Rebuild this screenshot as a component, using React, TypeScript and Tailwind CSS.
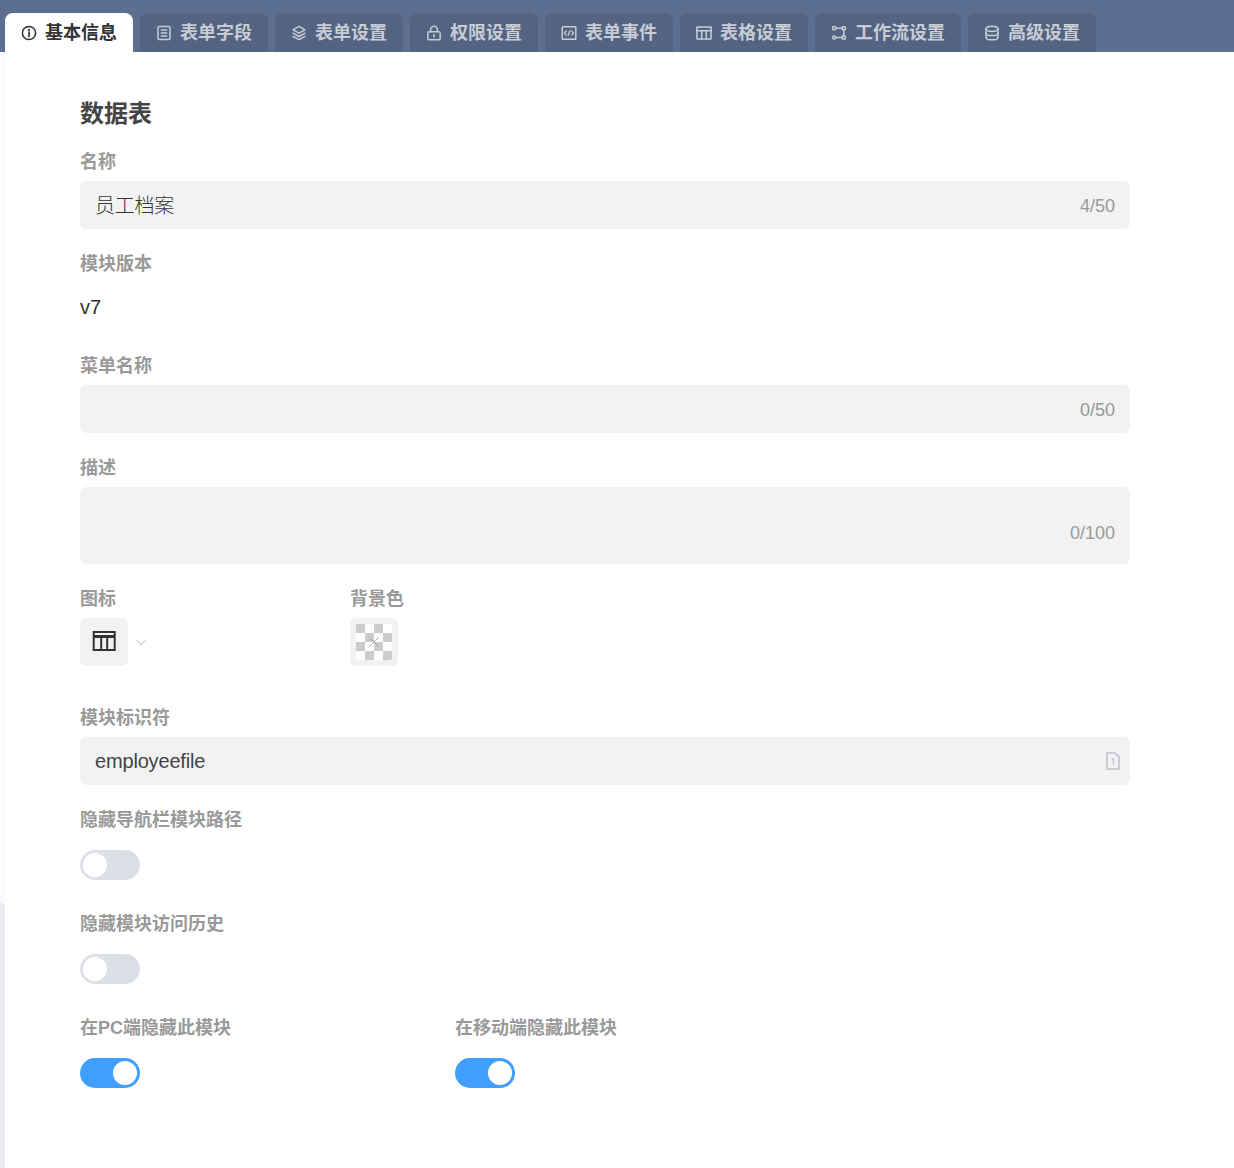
import React from "react";

const sv = { width: 16, height: 16, viewBox: "0 0 16 16", fill: "none", stroke: "currentColor", strokeWidth: 1.5, strokeLinecap: "round" as const, strokeLinejoin: "round" as const };

const icons: Record<string, React.ReactNode> = {
  info: (
    <svg {...sv}>
      <circle cx="8" cy="8" r="6.6" />
      <path d="M8 7.400v4" strokeWidth="1.700" />
      <path d="M8 4.600v.9" strokeWidth="1.800" />
    </svg>
  ),
  list: (
    <svg {...sv}>
      <rect x="2" y="1.500" width="12" height="13" rx="1" />
      <path d="M5.300 5h5.400M5.300 8h5.400M5.300 11h5.400" />
    </svg>
  ),
  layers: (
    <svg {...sv}>
      <path d="M8 1.400 14 4.800l-6 3.400L2 4.800z" />
      <path d="M2 8.200 8 11.500l6-3.300" />
      <path d="M2 11.300 8 14.600l6-3.300" />
    </svg>
  ),
  lock: (
    <svg {...sv}>
      <rect x="1.800" y="6.800" width="12.400" height="8" rx="1.400" />
      <path d="M4.600 6.800V4.600a3.400 3.400 0 0 1 6.800 0v2.200" />
      <path d="M8 9.800v1.800" strokeWidth="1.700" />
    </svg>
  ),
  code: (
    <svg {...sv}>
      <rect x="1.200" y="1.800" width="13.600" height="12.400" rx="0.8" />
      <path d="M5.200 6 3.500 8l1.700 2M10.800 6l1.700 2-1.700 2M8.900 5.500 7.100 10.500" strokeWidth="1.300" />
    </svg>
  ),
  table: (
    <svg {...sv}>
      <rect x="0.900" y="2" width="14.200" height="12" rx="0.5" />
      <path d="M0.900 5.800h14.200M5.700 5.800V14M10.300 5.800V14" />
    </svg>
  ),
  flow: (
    <svg {...sv}>
      <rect x="1.700" y="1.800" width="3" height="3" rx="0.5" />
      <rect x="11.300" y="1.800" width="3" height="3" rx="0.5" />
      <circle cx="3.200" cy="12.500" r="1.600" />
      <rect x="11.300" y="11" width="3" height="3" rx="0.5" />
      <path d="M4.700 3.300h6.600M12.800 4.800V11M4.800 12.500h6.500" />
    </svg>
  ),
  db: (
    <svg {...sv}>
      <ellipse cx="8" cy="3.800" rx="6" ry="2.600" />
      <path d="M2 3.800v8.400c0 1.400 2.700 2.600 6 2.600s6-1.200 6-2.600V3.800" />
      <path d="M2 8c0 1.400 2.700 2.600 6 2.600S14 9.400 14 8" />
    </svg>
  ),
};

const tabs = [
  ["info", "基本信息"],
  ["list", "表单字段"],
  ["layers", "表单设置"],
  ["lock", "权限设置"],
  ["code", "表单事件"],
  ["table", "表格设置"],
  ["flow", "工作流设置"],
  ["db", "高级设置"],
];

function Label({ children }: { children: React.ReactNode }) {
  return <div className="h-6 mb-2 text-[18px] leading-[27px] font-bold text-[#999999]">{children}</div>;
}

function Field({ label, value, count }: { label: string; value?: string; count: string }) {
  return (
    <div className="mb-[22px]">
      <Label>{label}</Label>
      <div className="h-12 rounded-[6px] bg-[#f2f2f2] px-[15px] flex items-center justify-between">
        <span className="text-[20px] leading-[30px] pt-[1px] font-light tracking-[-0.25px] text-[#333333]">{value}</span>
        <span className="text-[18px] leading-[26px] pt-[1px] text-[#999999]">{count}</span>
      </div>
    </div>
  );
}

function Toggle({ on }: { on?: boolean }) {
  return (
    <div className={`w-[60px] h-[30px] rounded-full p-[3px] flex ${on ? "bg-[#409eff] justify-end" : "bg-[#dcdfe6] justify-start"}`}>
      <div className="w-6 h-6 rounded-full bg-white" />
    </div>
  );
}

function ToggleItem({ label, on }: { label: string; on?: boolean }) {
  return (
    <div className="mb-5">
      <Label>{label}</Label>
      <div className="h-[52px] flex items-center">
        <Toggle on={on} />
      </div>
    </div>
  );
}

export default function App() {
  return (
    <div
      className="w-[1234px] h-[1168px] overflow-hidden bg-white flex flex-col"
      style={{ fontFamily: '"Liberation Sans", "Noto Sans CJK SC", sans-serif' }}
    >
      <div className="h-[52px] shrink-0 bg-[#5d6f91] pt-[13px] pl-[5px] flex gap-[7px]">
        {tabs.map(([ic, t], i) => (
          <div
            key={t}
            className={`h-[39px] px-4 rounded-t-lg flex items-center gap-2 text-[18px] font-bold ${
              i === 0 ? "bg-white text-[#333333]" : "bg-[#536382] text-[#c8ccd4]"
            }`}
          >
            {icons[ic]}
            <span className="pt-[2px]">{t}</span>
          </div>
        ))}
      </div>

      <div className="flex-1 flex">
        <div className="w-[5px] shrink-0 flex flex-col">
          <div className="h-[851px] bg-[#f8fafb]" />
          <div className="flex-1 bg-[#e8eaf0] rounded-tr-[4px]" />
        </div>
        <div className="w-[1050px] ml-[75px] pt-[45px]">
          <div className="h-8 mb-5 text-[24px] leading-[34px] font-bold text-[#444444]">数据表</div>

          <Field label="名称" value="员工档案" count="4/50" />

          <div className="mb-[22px]">
            <Label>模块版本</Label>
            <div className="h-12 flex items-center text-[20px] text-[#333333]">v7</div>
          </div>

          <Field label="菜单名称" count="0/50" />

          <div className="mb-[22px]">
            <Label>描述</Label>
            <div className="h-[77px] rounded-[6px] bg-[#f2f2f2] px-[15px] flex items-end justify-end pb-[18px]">
              <span className="text-[18px] leading-[26px] text-[#999999]">0/100</span>
            </div>
          </div>

          <div className="flex mb-[39px]">
            <div className="w-[270px]">
              <Label>图标</Label>
              <div className="flex items-center gap-[7px]">
                <div className="w-12 h-12 rounded-[6px] bg-[#f2f2f2] flex items-center justify-center">
                  <svg width="24" height="24" viewBox="0 0 24 24" fill="none" stroke="#333333" strokeWidth="2">
                    <rect x="1.700" y="2" width="21" height="18" />
                    <path d="M1.700 6.500h21" strokeWidth="3" />
                    <path d="M9.200 7v13M15.200 7v13" />
                  </svg>
                </div>
                <svg width="12" height="12" viewBox="0 0 12 12" fill="none" stroke="#d4d8e0" strokeWidth="1.400">
                  <path d="M1.500 4 6 8.500 10.500 4" />
                </svg>
              </div>
            </div>
            <div>
              <Label>背景色</Label>
              <div className="w-12 h-12 rounded-[6px] bg-[#f2f2f2] flex items-center justify-center">
                <svg width="36" height="36" viewBox="0 0 36 36">
                  <rect width="36" height="36" rx="2" fill="#ffffff" />
                  <path
                    d="M0 0h9v9H0zM18 0h9v9h-9zM9 9h9v9H9zM27 9h9v9h-9zM0 18h9v9H0zM18 18h9v9h-9zM9 27h9v9H9zM27 27h9v7a2 2 0 0 1-2 2h-7z"
                    fill="#cccccc"
                  />
                  <path d="M13.500 13.500l9 9M22.500 13.500l-9 9" stroke="#999999" strokeWidth="0.800" />
                </svg>
              </div>
            </div>
          </div>

          <div className="mb-[22px]">
            <Label>模块标识符</Label>
            <div className="h-12 rounded-[6px] bg-[#f2f2f2] pl-[15px] pr-[10px] flex items-center justify-between">
              <span className="text-[20px] tracking-[-0.17px] text-[#444444]">employeefile</span>
              <svg width="14" height="18" viewBox="0 0 14 18" fill="none" stroke="#c8ccd4" strokeWidth="2" strokeLinejoin="round">
                <path d="M1 1h8l4 4v12H1z" />
                <path d="M5.500 7.500 7.500 6.800v6" strokeWidth="1.600" />
              </svg>
            </div>
          </div>

          <ToggleItem label="隐藏导航栏模块路径" />
          <ToggleItem label="隐藏模块访问历史" />

          <div className="flex">
            <div className="w-[375px]">
              <ToggleItem label="在PC端隐藏此模块" on />
            </div>
            <div>
              <ToggleItem label="在移动端隐藏此模块" on />
            </div>
          </div>
        </div>
      </div>
    </div>
  );
}
